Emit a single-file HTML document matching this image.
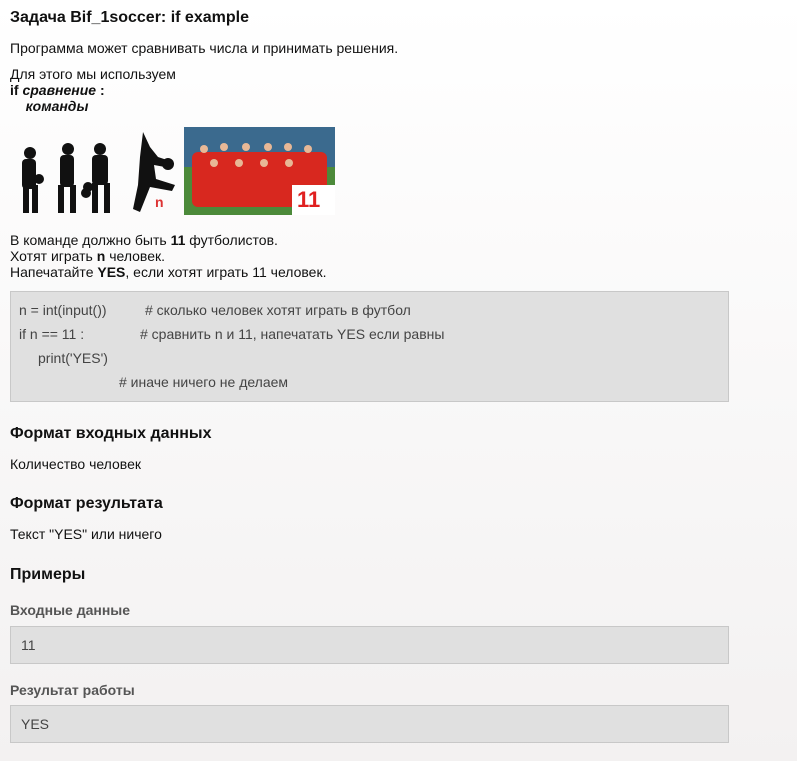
<!DOCTYPE html>
<html><head><meta charset="utf-8"><style>
body{margin:0;width:797px;height:761px;background:linear-gradient(#ffffff,#f3f1f1);font-family:"Liberation Sans",sans-serif;font-size:14px;color:#111;position:relative;overflow:hidden}
.a{position:absolute;left:10px;white-space:nowrap}
h{font-weight:bold;font-size:16px}
.box{position:absolute;left:10px;width:717px;background:#e0e0e0;border:1px solid #c8c8c8;color:#444}
.lab{font-weight:bold;color:#555;font-size:14px}
.c{position:absolute;white-space:nowrap;font-size:14px;color:#444}
</style></head><body>
<div class="a" style="top:9px"><h>Задача Bif_1soccer: if example</h></div>
<div class="a" style="top:40px">Программа может сравнивать числа и принимать решения.</div>
<div class="a" style="top:66px;line-height:16px">Для этого мы используем<br><b>if <i>сравнение</i> :</b><br>&nbsp;&nbsp;&nbsp;&nbsp;<b><i>команды</i></b></div>
<svg style="position:absolute;left:10px;top:127px" width="172" height="90">
<g fill="#111">
<circle cx="20" cy="26" r="6"/><rect x="12" y="32" width="14" height="30" rx="4"/><rect x="13" y="58" width="6" height="28"/><rect x="22" y="58" width="6" height="28"/>
<circle cx="58" cy="22" r="6"/><rect x="50" y="28" width="14" height="32" rx="4"/><rect x="48" y="58" width="6" height="28"/><rect x="60" y="58" width="6" height="28"/>
<circle cx="90" cy="22" r="6"/><rect x="82" y="28" width="16" height="30" rx="4"/><rect x="82" y="56" width="6" height="30"/><rect x="94" y="56" width="6" height="30"/>
<path d="M133 5 L140 20 L148 30 L160 34 L155 40 L144 38 L146 52 L165 58 L162 64 L140 60 L130 85 L123 82 L128 58 L130 30 Z"/>
<circle cx="29" cy="52" r="5"/><circle cx="78" cy="60" r="5"/><circle cx="76" cy="66" r="5"/><circle cx="158" cy="37" r="6"/>
</g>
<text x="145" y="80" fill="#d33" font-family="Liberation Sans" font-weight="bold" font-size="14">n</text>
</svg>
<svg style="position:absolute;left:184px;top:127px" width="151" height="88">
<rect width="151" height="88" fill="#3b6a8e"/><rect y="40" width="151" height="48" fill="#4c8a3a"/>
<g fill="#d8281f"><rect x="8" y="25" width="135" height="55" rx="6"/></g>
<g fill="#e8b896"><circle cx="20" cy="22" r="4"/><circle cx="40" cy="20" r="4"/><circle cx="62" cy="20" r="4"/><circle cx="84" cy="20" r="4"/><circle cx="104" cy="20" r="4"/><circle cx="124" cy="22" r="4"/><circle cx="30" cy="36" r="4"/><circle cx="55" cy="36" r="4"/><circle cx="80" cy="36" r="4"/><circle cx="105" cy="36" r="4"/></g>
<rect x="108" y="58" width="43" height="30" fill="#fff"/>
<text x="113" y="80" fill="#e02020" font-family="Liberation Sans" font-weight="bold" font-size="22">11</text>
</svg>
<div class="a" style="top:232px;line-height:16px">В команде должно быть <b>11</b> футболистов.<br>Хотят играть <b>n</b> человек.<br>Напечатайте <b>YES</b>, если хотят играть 11 человек.</div>
<div class="box" style="top:291px;height:109px"></div>
<div class="c" style="left:19px;top:302px">n = int(input())</div>
<div class="c" style="left:145px;top:302px"># сколько человек хотят играть в футбол</div>
<div class="c" style="left:19px;top:326px">if n == 11 :</div>
<div class="c" style="left:140px;top:326px"># сравнить n и 11, напечатать YES если равны</div>
<div class="c" style="left:38px;top:350px">print('YES')</div>
<div class="c" style="left:119px;top:374px"># иначе ничего не делаем</div>
<div class="a" style="top:425px"><h>Формат входных данных</h></div>
<div class="a" style="top:456px">Количество человек</div>
<div class="a" style="top:495px"><h>Формат результата</h></div>
<div class="a" style="top:526px">Текст "YES" или ничего</div>
<div class="a" style="top:566px"><h>Примеры</h></div>
<div class="a lab" style="top:602px">Входные данные</div>
<div class="box" style="top:626px;height:36px"><div style="padding:10px 0 0 10px">11</div></div>
<div class="a lab" style="top:682px">Результат работы</div>
<div class="box" style="top:705px;height:36px"><div style="padding:10px 0 0 10px">YES</div></div>
</body></html>
